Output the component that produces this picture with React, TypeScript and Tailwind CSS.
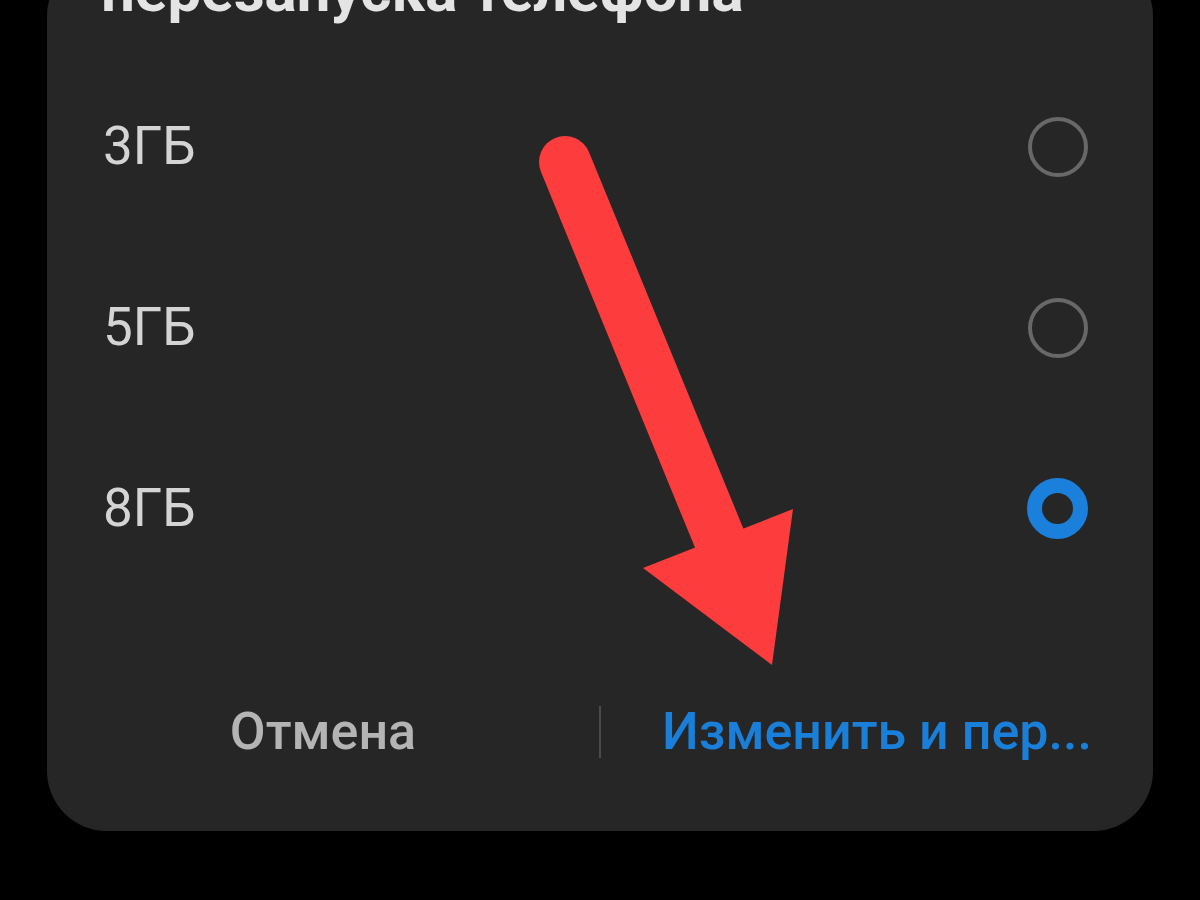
import { useState } from "react";

const options = ["3ГБ", "5ГБ", "8ГБ"];

const Radio = ({ checked }: { checked: boolean }) =>
  checked ? (
    <span className="block w-[61px] h-[61px] rounded-full border-[15px] border-[#1b80dc]" />
  ) : (
    <span className="block w-[60px] h-[60px] rounded-full border-[4px] border-[#686868]" />
  );

export default function App() {
  const [selected, setSelected] = useState(2);

  return (
    <div
      className="relative w-[1200px] h-[900px] overflow-hidden bg-black"
      style={{ fontFamily: "Roboto, 'Noto Sans', sans-serif" }}
    >
      <div className="mx-[47px] mt-[-44px] rounded-[60px] bg-[#262626] pl-[54px] pr-[65px] pb-[49px]">
        {/* dialog title, cut off by the top of the screen */}
        <div className="h-[70px] leading-[70px] text-[60px] font-bold text-[#e4e4e4] whitespace-nowrap">
          перезапуска телефона
        </div>

        <div className="pt-[30px]">
          {options.map((label, i) => (
            <button
              key={label}
              onClick={() => setSelected(i)}
              className="flex w-full h-[181px] items-center justify-between"
            >
              <span className="ml-[2px] text-[53px] text-[#d4d4d4]">{label}</span>
              <Radio checked={selected === i} />
            </button>
          ))}
        </div>

        <div className="mt-[83px] ml-[-54px] mr-[-65px] flex h-[100px] items-center">
          <button className="flex-1 text-center text-[52px] font-medium text-[#b4b4b4]">
            Отмена
          </button>
          <span className="w-[2px] h-[52px] bg-[#4a4a4a]" />
          <button className="flex-1 text-center text-[52px] font-medium text-[#1a7fd9]">
            Изменить и пер...
          </button>
        </div>
      </div>

      {/* annotation arrow */}
      <svg
        className="absolute inset-0 pointer-events-none"
        width="1200"
        height="900"
        viewBox="0 0 1200 900"
      >
        <line
          x1="565"
          y1="162"
          x2="722"
          y2="545"
          stroke="#fd3c3d"
          strokeWidth="52"
          strokeLinecap="round"
        />
        <polygon points="643,568 793,509 772,665" fill="#fd3c3d" />
      </svg>
    </div>
  );
}
